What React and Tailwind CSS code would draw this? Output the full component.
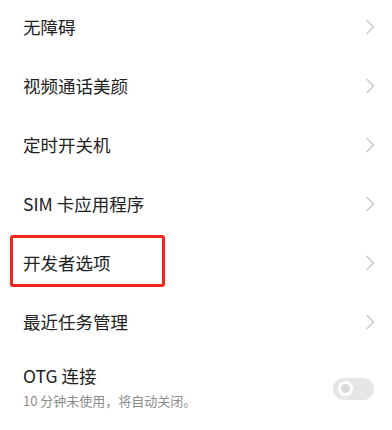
import React from 'react';

const items = ['无障碍', '视频通话美颜', '定时开关机', 'SIM 卡应用程序', '开发者选项', '最近任务管理'];

function Chevron() {
  return (
    <svg width="10" height="16" viewBox="0 0 10 16" className="shrink-0">
      <path d="M1.5 1 L8.5 8 L1.5 15" fill="none" stroke="#c4c4c4" strokeWidth="1.2" />
    </svg>
  );
}

function Row({ label, highlight }) {
  return (
    <div className="relative flex h-[59px] items-center justify-between pl-[23px] pr-[17px]">
      <span className="text-[17.5px] leading-none text-[#222222]">{label}</span>
      <Chevron />
      {highlight && (
        <div className="absolute left-[10px] top-[2px] h-[52px] w-[155px] rounded-[3px] border-[3px] border-[#f5241c]" />
      )}
    </div>
  );
}

export default function App() {
  return (
    <div
      className="h-[430px] w-[392px] overflow-hidden bg-white"
      style={{ fontFamily: '"Noto Sans CJK SC", Roboto, sans-serif' }}
    >
      <div className="-mt-[3px]">
        {items.map((label) => (
          <Row key={label} label={label} highlight={label === '开发者选项'} />
        ))}
        <div className="flex items-center justify-between pl-[23px] pr-[18px] pt-[16px]">
          <div className="flex flex-col">
            <span className="text-[17.5px] leading-none text-[#222222]">OTG 连接</span>
            <span className="mt-[9px] text-[13px] leading-none text-[#8c8c8c]">10 分钟未使用，将自动关闭。</span>
          </div>
          <div className="mt-[4px] flex h-[22px] w-[41px] items-center rounded-full bg-[#e6e6e6] pl-[5px]">
            <div className="flex h-[15px] w-[15px] items-center justify-center rounded-full bg-white">
              <div className="h-[9px] w-[9px] rounded-full bg-[#dadada]" />
            </div>
          </div>
        </div>
      </div>
    </div>
  );
}
